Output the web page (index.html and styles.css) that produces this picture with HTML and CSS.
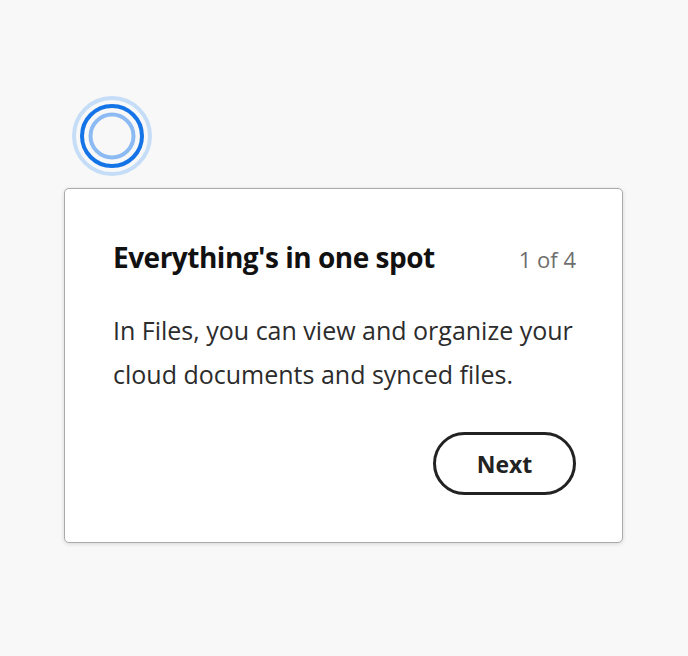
FILE: index.html
```html
<!DOCTYPE html>
<html>
<head>
    <meta charset="UTF-8">
    <meta name="viewport" content="width=device-width, initial-scale=1.0">
    <title>Coach mark</title>
    <link rel="stylesheet" href="styles.css">
</head>

<body>
<div class="tour">
    <div class="indicator">
        <svg width="80" height="80" viewBox="0 0 80 80">
            <circle class="ring ring--outer" cx="40" cy="40" r="38"/>
            <circle class="ring ring--main" cx="40" cy="40" r="30"/>
            <circle class="ring ring--inner" cx="40" cy="40" r="21.5"/>
        </svg>
    </div>

    <div class="coach">
        <div class="coach__header">
            <h2 class="coach__title">Everything's in one spot</h2>
            <span class="coach__step">1 of 4</span>
        </div>
        <p class="coach__text">In Files, you can view and organize your cloud documents and synced files.</p>
        <div class="coach__footer">
            <button class="btn">Next</button>
        </div>
    </div>
</div>
</body>
</html>
```

FILE: styles.css
```css
* {
    padding: 0;
    margin: 0;
    box-sizing: border-box;
}

html {
    height: 100%;
}

body {
    height: 100%;
    font-family: "Open Sans", "Noto Sans", sans-serif;
    background-color: #f8f8f8;
    color: #2c2c2c;
}

.tour {
    display: flex;
    flex-direction: column;
    align-items: flex-start;
    gap: 12px;
    padding: 96px 0 0 64px;
}

.indicator {
    width: 80px;
    height: 80px;
    margin-left: 8px;
}

.indicator svg {
    display: block;
}

.ring {
    fill: none;
    stroke-width: 4;
}

.ring--outer {
    stroke: #c6ddf8;
}

.ring--main {
    stroke: #1473e6;
}

.ring--inner {
    stroke: #8cbaf3;
}

.coach {
    width: 559px;
    padding: 50px 46px 47px 48px;
    background-color: white;
    border: 1px solid #aaaaaa;
    border-radius: 5px;
    box-shadow: 0 1px 4px rgba(0, 0, 0, 0.14);
}

.coach__header {
    display: flex;
    justify-content: space-between;
    align-items: baseline;
}

.coach__title {
    font-size: 28px;
    line-height: 36px;
    font-weight: 700;
    color: #111;
    letter-spacing: -0.5px;
}

.coach__step {
    font-size: 22px;
    color: #6e6e6e;
}

.coach__text {
    margin-top: 33px;
    font-size: 25px;
    line-height: 44px;
    color: #2c2c2c;
}

.coach__footer {
    display: flex;
    justify-content: flex-end;
    margin-top: 36px;
}

.btn {
    width: 143px;
    height: 63px;
    border: 3px solid #222;
    border-radius: 32px;
    background: white;
    font-family: inherit;
    font-size: 23px;
    font-weight: 700;
    color: #222;
}
```
